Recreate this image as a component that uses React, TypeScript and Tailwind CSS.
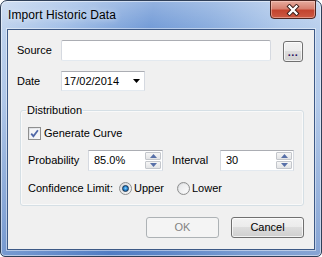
import React from "react";

function SpinBox({ value, width }: { value: string; width: string }) {
  return (
    <div className={`flex h-[21px] ${width} border border-[#abadb3] border-b-[#e3e9ef] border-x-[#d5d9e0] bg-white`}>
      <div className="flex flex-1 items-center pl-[5px] text-[11px] leading-[13px]">{value}</div>
      <div className="flex w-[17px] flex-col gap-px py-px pr-px">
        {[0, 1].map((i) => (
          <div
            key={i}
            className="flex h-[8px] items-center justify-center rounded-[1px] border border-[#c3c6cb] bg-[linear-gradient(180deg,#f6f6f6,#e3e4e6)]"
          >
            <svg width="7" height="4" viewBox="0 0 7 4">
              {i === 0 ? (
                <path d="M0 4 L3.5 0 L7 4 Z" fill="#5870a8" />
              ) : (
                <path d="M0 0 L3.5 4 L7 0 Z" fill="#5870a8" />
              )}
            </svg>
          </div>
        ))}
      </div>
    </div>
  );
}

function Radio({ checked }: { checked?: boolean }) {
  return (
    <div className="flex h-[13px] w-[13px] items-center justify-center rounded-full border border-[#8e8f8f] bg-[linear-gradient(135deg,#d4d6d9,#f9f9f9)]">
      {checked ? (
        <div className="h-[7px] w-[7px] rounded-full border border-[#16324f] bg-[radial-gradient(circle_at_50%_45%,#8fd6ff_0%,#2a8ad6_45%,#0e4a8c_100%)]" />
      ) : (
        <div className="h-[9px] w-[9px] rounded-full bg-[linear-gradient(135deg,#e6e7e9,#fbfbfb)]" />
      )}
    </div>
  );
}

export default function App() {
  return (
    <div className="h-[257px] w-[322px] bg-white font-['Liberation_Sans',Arial,sans-serif] text-[11px] leading-[13px] text-black">
      <div className="flex h-full w-full flex-col rounded-t-[7px] rounded-b-[5px] border border-[#2f3f58] bg-[linear-gradient(180deg,rgba(255,255,255,0.25)_0%,rgba(255,255,255,0)_12%,rgba(20,70,160,0.05)_40%,rgba(20,70,160,0.35)_100%),linear-gradient(100deg,#c1d4ee_0%,#a2bfe7_18%,#7099d6_42%,#86aadd_58%,#adc7ea_78%,#c3d6ef_100%)] shadow-[inset_0_0_0_1px_rgba(255,255,255,0.5)]">
        <div className="flex h-[28px] items-start justify-between pl-[7px]">
          <span className="mt-[7px] text-[12px] leading-[14px] tracking-[0.1px] text-black [text-shadow:0_0_6px_rgba(255,255,255,0.9)]">
            Import Historic Data
          </span>
          <div className="mr-[5px] -mt-px flex h-[19px] w-[46px] items-center justify-center rounded-b-[4px] border border-[#4d2520] bg-[linear-gradient(180deg,#e6ab9e_0%,#d78070_45%,#c3442f_55%,#cc5a44_100%)] shadow-[inset_0_0_0_1px_rgba(255,220,210,0.45)]">
            <svg width="14" height="12" viewBox="0 0 14 12">
              <path d="M3.5 2.5 L10.5 9.5 M10.5 2.5 L3.5 9.5" stroke="#3a1c18" strokeWidth="4.2" strokeLinecap="square" />
              <path d="M3.5 2.5 L10.5 9.5 M10.5 2.5 L3.5 9.5" stroke="#ffffff" strokeWidth="2.3" strokeLinecap="square" />
            </svg>
          </div>
        </div>

        <div className="mx-[6px] mb-[6px] flex flex-1 flex-col border border-[#3d5986] bg-[#f0f0f0] pl-[9px] pr-[10px] pt-[10px] shadow-[0_0_0_1px_rgba(255,255,255,0.45)]">
          <div className="flex h-[21px] items-center">
            <span className="w-[44px]">Source</span>
            <div className="h-[21px] w-[210px] rounded-[2px] border border-[#abadb3] border-b-[#e3e9ef] border-x-[#d5d9e0] bg-white" />
            <div className="ml-[12px] mt-[2px] flex h-[21px] w-[20px] items-end justify-center rounded-[3px] border border-[#707070] bg-[linear-gradient(180deg,#f2f2f2_0%,#ebebeb_50%,#dddddd_50%,#cfcfcf_100%)] pb-[5px] shadow-[inset_0_0_0_1px_rgba(255,255,255,0.7)]">
              <span className="text-[11px] leading-[8px] font-bold tracking-[0.5px] text-[#2a0f60]">...</span>
            </div>
          </div>

          <div className="mt-[10px] flex h-[20px] items-center">
            <span className="w-[44px]">Date</span>
            <div className="flex h-[20px] w-[84px] items-center justify-between border border-[#abadb3] border-b-[#e3e9ef] border-x-[#d5d9e0] bg-white pl-[2px] pr-[4px]">
              <span>17/02/2014</span>
              <svg width="7" height="4" viewBox="0 0 7 4">
                <path d="M0 0 L7 0 L3.5 4 Z" fill="#000" />
              </svg>
            </div>
          </div>

          <fieldset className="ml-[3px] mt-[12px] rounded-[3px] border border-[#d5dfe5] px-[7px] pb-[10px] pt-[10px] shadow-[inset_0_0_0_1px_rgba(255,255,255,0.6)]">
            <legend className="-ml-[2px] px-[1px] leading-[14px]">Distribution</legend>
            <div className="flex h-[13px] items-center">
              <div className="flex h-[13px] w-[13px] items-center justify-center border border-[#8e8f8f] bg-[linear-gradient(135deg,#d9dce1,#fbfbfb)]">
                <svg width="11" height="11" viewBox="0 0 11 11">
                  <rect x="1" y="1" width="9" height="9" fill="#f4f5f7" />
                  <path d="M2.2 5.6 L4.4 8.2 L8.9 2.2" stroke="#5068a8" strokeWidth="1.8" fill="none" />
                </svg>
              </div>
              <span className="ml-[3px]">Generate Curve</span>
            </div>

            <div className="mt-[10px] flex h-[21px] items-center">
              <span className="w-[60px]">Probability</span>
              <SpinBox value="85.0%" width="w-[75px]" />
              <span className="ml-[9px] w-[48px]">Interval</span>
              <SpinBox value="30" width="w-[74px]" />
            </div>

            <div className="mt-[11px] flex h-[13px] items-center">
              <span className="w-[91px]">Confidence Limit:</span>
              <div className="flex w-[58px] items-center">
                <Radio checked />
                <span className="ml-[2px]">Upper</span>
              </div>
              <div className="flex items-center">
                <Radio />
                <span className="ml-[2px]">Lower</span>
              </div>
            </div>
          </fieldset>

          <div className="mt-[11px] flex justify-end gap-[12px]">
            <div className="flex h-[21px] w-[73px] items-center justify-center rounded-[3px] border border-[#adb2b5] bg-[#f4f4f4] text-[#838383]">
              OK
            </div>
            <div className="flex h-[21px] w-[73px] items-center justify-center rounded-[3px] border border-[#707070] bg-[linear-gradient(180deg,#f2f2f2_0%,#ebebeb_50%,#dddddd_50%,#cfcfcf_100%)] shadow-[inset_0_0_0_1px_rgba(255,255,255,0.7)]">
              Cancel
            </div>
          </div>
        </div>
      </div>
    </div>
  );
}
